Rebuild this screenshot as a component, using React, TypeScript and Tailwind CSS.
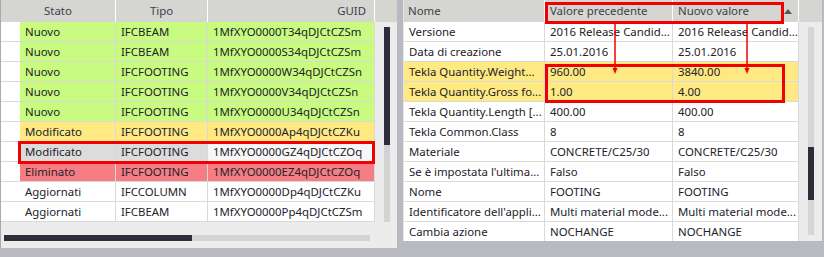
import React from "react";

const G = "bg-[#c8fb80]";
const Y = "bg-[#fee983]";
const R = "bg-[#f77d85]";
const S = "bg-[#dcdcdc]";
const W = "bg-white";

type LRow = { s: string; t: string; g: string; bg: string; gbg?: string };
const leftRows: LRow[] = [
  { s: "Nuovo", t: "IFCBEAM", g: "1MfXYO0000T34qDJCtCZSm", bg: G },
  { s: "Nuovo", t: "IFCBEAM", g: "1MfXYO0000S34qDJCtCZSm", bg: G },
  { s: "Nuovo", t: "IFCFOOTING", g: "1MfXYO0000W34qDJCtCZSn", bg: G },
  { s: "Nuovo", t: "IFCFOOTING", g: "1MfXYO0000V34qDJCtCZSn", bg: G },
  { s: "Nuovo", t: "IFCFOOTING", g: "1MfXYO0000U34qDJCtCZSn", bg: G },
  { s: "Modificato", t: "IFCFOOTING", g: "1MfXYO0000Ap4qDJCtCZKu", bg: Y },
  { s: "Modificato", t: "IFCFOOTING", g: "1MfXYO0000GZ4qDJCtCZOq", bg: S, gbg: "bg-[#f7f7f7]" },
  { s: "Eliminato", t: "IFCFOOTING", g: "1MfXYO0000EZ4qDJCtCZOq", bg: R },
  { s: "Aggiornati", t: "IFCCOLUMN", g: "1MfXYO0000Dp4qDJCtCZKu", bg: W },
  { s: "Aggiornati", t: "IFCBEAM", g: "1MfXYO0000Pp4qDJCtCZSm", bg: W },
];

type RRow = { n: string; a: string; b: string; bg: string };
const rightRows: RRow[] = [
  { n: "Versione", a: "2016 Release Candid...", b: "2016 Release Candid...", bg: W },
  { n: "Data di creazione", a: "25.01.2016", b: "25.01.2016", bg: W },
  { n: "Tekla Quantity.Weight...", a: "960.00", b: "3840.00", bg: Y },
  { n: "Tekla Quantity.Gross fo...", a: "1.00", b: "4.00", bg: Y },
  { n: "Tekla Quantity.Length [...", a: "400.00", b: "400.00", bg: W },
  { n: "Tekla Common.Class", a: "8", b: "8", bg: W },
  { n: "Materiale", a: "CONCRETE/C25/30", b: "CONCRETE/C25/30", bg: W },
  { n: "Se è impostata l'ultima...", a: "Falso", b: "Falso", bg: W },
  { n: "Nome", a: "FOOTING", b: "FOOTING", bg: W },
  { n: "Identificatore dell'appli...", a: "Multi material mode...", b: "Multi material mode...", bg: W },
  { n: "Cambia azione", a: "NOCHANGE", b: "NOCHANGE", bg: W },
];

const cell = "h-full flex items-center pl-[5px] border-r border-[#d9d9d9] whitespace-nowrap overflow-hidden";

export default function App() {
  return (
    <div className="relative w-[824px] h-[257px] bg-[#b9b9c1] flex items-start overflow-hidden text-[11.4px] leading-none text-[#22222a] font-['Noto_Sans',sans-serif]">
      {/* Left panel */}
      <div className="w-[397px] h-[248px] bg-[#ececec] border-l border-[#a9a9b1] flex flex-col">
        {/* header */}
        <div className="flex h-[22px] bg-[#d5d5d1] text-[#40404a] shrink-0">
          <div className="w-[115px] flex items-center justify-center border-r border-white">Stato</div>
          <div className="w-[92px] flex items-center justify-center border-r border-white">Tipo</div>
          <div className="w-[167px] flex items-center justify-end pr-[8px] border-r border-white">GUID</div>
          <div className="flex-1" />
        </div>
        <div className="flex h-[203px] shrink-0">
          <div className="w-[374px] flex flex-col">
            {leftRows.map((r, i) => (
              <div key={i} className="flex h-[20px] shrink-0 border-b border-[#d9d9d9] bg-white">
                <div className="w-[19px] h-full bg-white" />
                <div className={`${cell} w-[96px] ${r.bg}`}>{r.s}</div>
                <div className={`${cell} w-[92px] ${r.bg}`}>{r.t}</div>
                <div className={`${cell} flex-1 pl-[4px] ${r.gbg ?? r.bg}`}>{r.g}</div>
              </div>
            ))}
          </div>
          {/* vertical scrollbar */}
          <div className="flex-1 flex justify-center pl-[2px] pt-[5px]">
            <div className="w-[6px] h-[195px] flex flex-col">
              <div className="h-[118px] bg-[#2e2e3a]" />
              <div className="flex-1 bg-[#d3d3d3]" />
            </div>
          </div>
        </div>
        {/* horizontal scrollbar */}
        <div className="flex pl-[3px] pt-[10px]">
          <div className="w-[188px] h-[6px] bg-[#2e2e3a]" />
          <div className="w-[178px] h-[6px] bg-[#d3d3d3]" />
        </div>
      </div>

      {/* splitter */}
      <div className="w-[6px]" />

      {/* Right panel */}
      <div className="w-[419px] h-[241px] bg-[#ececec] border-l border-[#e4e4e4] flex flex-col overflow-hidden">
        <div className="flex h-[22px] bg-[#d5d5d1] text-[#40404a] shrink-0">
          <div className="w-[141px] flex items-center pl-[4px] border-r border-white">Nome</div>
          <div className="w-[128px] flex items-center pl-[5px] border-r border-white">Valore precedente</div>
          <div className="w-[126px] flex items-center pl-[5px] justify-between pr-[5px] border-r border-white">
            <span>Nuovo valore</span>
            <svg width="8" height="5" viewBox="0 0 8 5" className="mr-[1px]">
              <polygon points="0,5 8,5 4,0" fill="#55555f" />
            </svg>
          </div>
          <div className="flex-1" />
        </div>
        <div className="flex flex-1">
          <div className="w-[395px] flex flex-col">
            {rightRows.map((r, i) => (
              <div key={i} className={`flex h-[20px] shrink-0 border-b border-[#d9d9d9] ${r.bg}`}>
                <div className={`${cell} w-[141px] pl-[4px]`}>{r.n}</div>
                <div className={`${cell} w-[128px]`}>{r.a}</div>
                <div className={`${cell} w-[126px]`}>{r.b}</div>
              </div>
            ))}
          </div>
          <div className="flex-1 flex justify-center pt-[5px]">
            <div className="w-[6px] h-[208px] flex flex-col">
              <div className="h-[120px] bg-[#d6d6d6]" />
              <div className="h-[53px] bg-[#2e2e3a]" />
              <div className="flex-1 bg-[#d6d6d6]" />
            </div>
          </div>
        </div>
      </div>

      {/* red highlight boxes */}
      <div className="absolute left-[18px] top-[141px] w-[357px] h-[23px] border-[3px] border-[#f00000]" />
      <div className="absolute left-[545px] top-[2px] w-[239px] h-[22px] border-[3px] border-[#f00000]" />
      <div className="absolute left-[545px] top-[64px] w-[240px] h-[39px] border-[3px] border-[#f00000]" />

      {/* arrows */}
      <svg className="absolute left-0 top-0 pointer-events-none" width="824" height="257">
        <line x1="615" y1="23" x2="615" y2="69" stroke="#f00000" strokeWidth="1.5" />
        <polygon points="612.5,68 617.5,68 615,74" fill="#f00000" />
        <line x1="747" y1="23" x2="747" y2="69" stroke="#f00000" strokeWidth="1.5" />
        <polygon points="744.5,68 749.5,68 747,74" fill="#f00000" />
      </svg>
    </div>
  );
}
